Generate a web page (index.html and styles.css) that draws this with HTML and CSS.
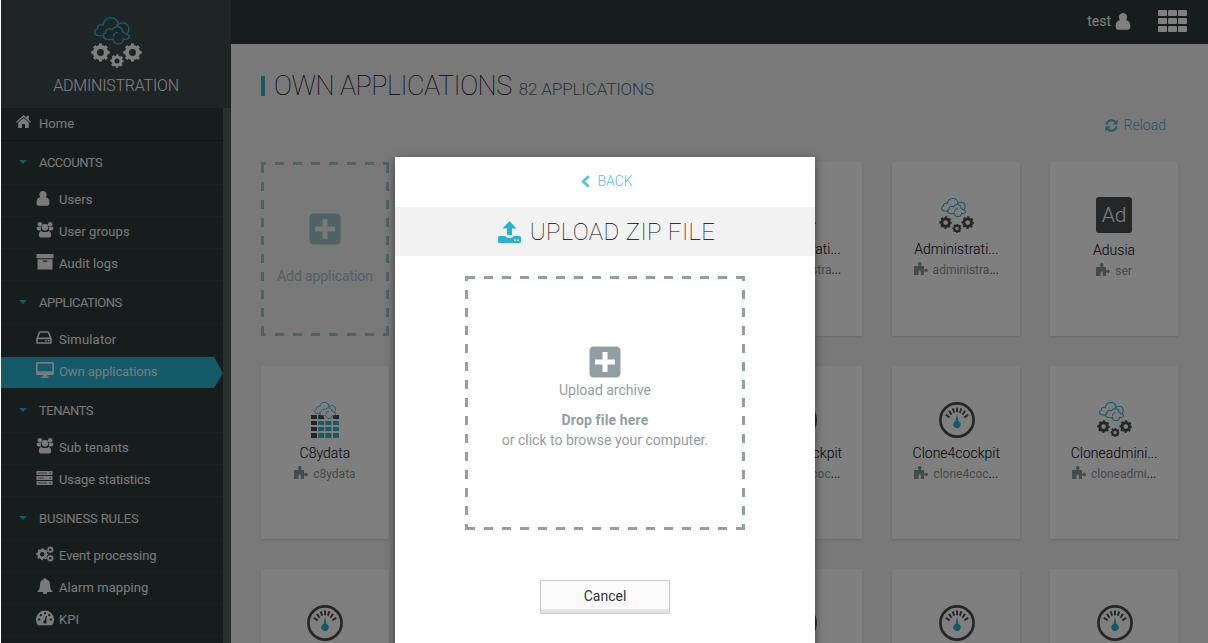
FILE: index.html
```html
<!DOCTYPE html>
<html lang="en">
<head>
<meta charset="utf-8">
<title>Administration</title>
<link rel="stylesheet" href="styles.css">
</head>
<body>
<svg class="defs" aria-hidden="true">
  <symbol id="clouds" viewBox="282 50 110 88">
    <g fill="none" stroke="#28b4d0" stroke-width="4.5">
      <path d="M314 108H298C282 108 282 90 293 87C292 76 302 72 310 76C312 60 324 54 334 54C346 54 355 63 357 77M350 80C357 66 384 66 387 84C388 92 386 98 383 102"/>
      <path d="M322 119C308 118 308 102 318 99C314 90 330 84 337 90C345 76 370 78 369 97C378 98 376 104 383 104C394 108 390 122 371 118C370 138 342 138 340 118C336 120 326 120 322 119ZM341 111C341 103 348 97 355 99"/>
    </g>
  </symbol>
  <symbol id="gear" viewBox="0 0 20 20">
    <circle cx="10" cy="10" r="5.8" fill="none" stroke="currentColor" stroke-width="4.4"/>
    <circle cx="10" cy="10" r="8.3" fill="none" stroke="currentColor" stroke-width="2.6" pathLength="16" stroke-dasharray="1 1" stroke-dashoffset=".5"/>
  </symbol>
  <symbol id="admin" viewBox="0 0 52 52">
    <use href="#clouds" x="2.7" y="-.6" width="36.7" height="29.3"/>
    <use href="#gear" x="0" y="26" width="19" height="19"/>
    <use href="#gear" x="32" y="26" width="19" height="19"/>
    <use href="#gear" x="19" y="37" width="14" height="14"/>
  </symbol>
  <symbol id="gauge" viewBox="0 0 36 36">
    <circle cx="18" cy="18" r="16.6" fill="none" stroke="currentColor" stroke-width="2.7"/>
    <path d="M18 5.5v4.8M13.7 6.4l1.5 4.4M22.3 6.4l-1.5 4.4M9.9 8.8l2.7 3.8M26.1 8.8l-2.7 3.8M6.7 12.8l4 2.6M29.3 12.8l-4 2.6" stroke="currentColor" stroke-width="1.9"/>
    <path d="M18 12l1.5 7a3.8 3.8 0 1 1-3 0z" fill="#28b4d0"/>
  </symbol>
  <symbol id="data" viewBox="0 0 36 36">
    <path d="M4 13h6v4H4zM4 19h6v4H4zM4 25h6v4H4zM4 31h6v5H4zM26 13h6v4h-6zM11.2 13h4.5l2 4h-6.500z" fill="currentColor"/>
    <path d="M11.200 19h6v4h-6zM18.400 19h6v4h-6zM26 19h6v4h-6zM11.200 25h6v4h-6zM18.400 25h6v4h-6zM26 25h6v4h-6zM11.200 31h6v5h-6zM18.400 31h6v5h-6zM26 31h6v5h-6z" fill="#28b4d0"/>
    <use href="#clouds" x="7" y="-.5" width="22.500" height="18"/>
  </symbol>
  <symbol id="puzzle" viewBox="0 0 14 13">
    <path d="M0 4h4.500V3a1.800 1.800 0 1 1 2.500 0v1h3v3.500h1a1.600 1.600 0 1 1 0 2h-1V13H6.800V9.500a1 1 0 0 0-2.200 0V13H0z" fill="currentColor"/>
  </symbol>
  <symbol id="user" viewBox="0 0 14 15">
    <path d="M7 0a3.500 3.700 0 0 1 2.600 6.300C12 6.500 13.500 8.500 13.500 12q0 2.700-2 2.700h-9q-2 0-2-2.700C.5 8.500 2 6.500 4.400 6.300A3.500 3.700 0 0 1 7 0z" fill="currentColor"/>
  </symbol>
  <symbol id="users" viewBox="0 0 18 17">
    <g fill="currentColor"><circle cx="3.500" cy="2.500" r="2.400"/><circle cx="14.500" cy="2.500" r="2.400"/><circle cx="9" cy="5.700" r="3.500"/><path d="M1.500 5h3.500q-.8 2.500 0 4H2Q0 9 0 7.200T1.500 5zM16.500 5H13q.8 2.500 0 4h3q2 0 2-1.800T16.500 5zM5 9.500q4 2.500 8 0 2.500.5 2.500 4.500 0 2.500-2 2.500h-9q-2 0-2-2.500 0-4 2.500-4.500z"/></g>
  </symbol>
  <symbol id="home" viewBox="0 0 15 13">
    <path d="M7.500 0l3 2.700V.8h2.300v4L15 6.900l-.8.9-6.700-5.900L.8 7.800 0 6.900zM7.500 3l5.300 4.600V13H9V9H6v4H2.200V7.600z" fill="currentColor"/>
  </symbol>
  <symbol id="archive" viewBox="0 0 16 15">
    <path d="M0 0h16v4H0zM1 5h14v9.500H1zM6 6v1.200h4V6z" fill="currentColor" fill-rule="evenodd"/>
  </symbol>
  <symbol id="drive" viewBox="0 0 15 12">
    <path d="M1 7L3.500.8h8L14 7v4.200H1zM1 6.800h13" fill="none" stroke="currentColor" stroke-width="1.500" stroke-linejoin="round"/><path d="M8.500 8.300H10v1.500H8.500zM11 8.300h1.500v1.500H11z" fill="currentColor"/>
  </symbol>
  <symbol id="desktop" viewBox="0 0 18 16">
    <path d="M1.500 0h15Q18 0 18 1.500v10q0 1.500-1.500 1.500H11v1.500h1.500V16h-7v-1.500H7V13H1.500Q0 13 0 11.500v-10Q0 0 1.500 0zm.2 1.700v7.600h14.600V1.700z" fill="currentColor" fill-rule="evenodd"/>
  </symbol>
  <symbol id="server" viewBox="0 0 16 14">
    <path d="M0 0h16v4H0zM0 5h16v4H0zM0 10h16v4H0z" fill="currentColor"/><path d="M1.500 2h9M1.500 7h6M1.500 12h9" stroke="#727b7b"/><path d="M13 2h1.500M13 7h1.500M13 12h1.500" stroke="#2e3a3a"/>
  </symbol>
  <symbol id="cogs" viewBox="0 0 18 16">
    <use href="#gear" x="0" y="2" width="12.500" height="12.500"/><use href="#gear" x="10.500" y="0" width="7.500" height="7.500"/><use href="#gear" x="10.500" y="8.500" width="7.500" height="7.500"/>
  </symbol>
  <symbol id="bell" viewBox="0 0 16 16">
    <path d="M8 0q1.200 0 1.200 1.300C12 2 13 4 13 7c0 3.500 1 5 2.500 6.300V14h-5.300a2.200 2.200 0 0 1-4.400 0H.5v-.7C2 12 3 10.500 3 7c0-3 1-5 3.800-5.700Q6.800 0 8 0z" fill="currentColor"/>
  </symbol>
  <symbol id="kpi" viewBox="0 0 16 14">
    <path d="M1.800 13.500A8 8 0 1 1 14.200 13.500z" fill="currentColor"/>
    <g fill="#2e3a3a"><circle cx="2.800" cy="8.500" r="1"/><circle cx="4.300" cy="4.500" r="1"/><circle cx="8" cy="2.800" r="1"/><circle cx="11.700" cy="4.500" r="1"/><circle cx="13.200" cy="8.500" r="1"/></g>
    <path d="M9.300 5.300L8.200 10" stroke="#2e3a3a" stroke-width="1.200"/><circle cx="8" cy="10.500" r="1.500" fill="#2e3a3a"/>
  </symbol>
  <symbol id="plus" viewBox="0 0 32 32">
    <path d="M5 .5h22Q31.500 .5 31.500 5v22q0 4.500-4.500 4.500H5Q.5 31.500.5 27V5Q.5.500 5 .500zM13.500 6v7.500H6v5h7.500V26h5v-7.500H26v-5h-7.500V6z" fill="currentColor" fill-rule="evenodd"/>
  </symbol>
</svg>

<div class="screen">
  <aside class="sidebar">
    <div class="brand">
      <svg class="brand-icon"><use href="#admin"/></svg>
      <span class="brand-name">ADMINISTRATION</span>
    </div>
    <nav class="nav">
      <a class="nav-home"><svg class="ico-home"><use href="#home"/></svg><span>Home</span></a>
      <h4 class="nav-head"><i class="caret"></i>ACCOUNTS</h4>
      <a class="nav-item"><svg class="ico-user"><use href="#user"/></svg><span>Users</span></a>
      <a class="nav-item"><svg class="ico-wide"><use href="#users"/></svg><span>User groups</span></a>
      <a class="nav-item"><svg class="ico-wide"><use href="#archive"/></svg><span>Audit logs</span></a>
      <h4 class="nav-head"><i class="caret"></i>APPLICATIONS</h4>
      <a class="nav-item"><svg class="ico-drive"><use href="#drive"/></svg><span class="loose">Simulator</span></a>
      <a class="nav-item active"><svg class="ico-wide"><use href="#desktop"/></svg><span class="tight">Own applications</span></a>
      <h4 class="nav-head"><i class="caret"></i>TENANTS</h4>
      <a class="nav-item"><svg class="ico-wide"><use href="#users"/></svg><span>Sub tenants</span></a>
      <a class="nav-item"><svg class="ico-server"><use href="#server"/></svg><span class="tight">Usage statistics</span></a>
      <h4 class="nav-head wide"><i class="caret"></i>BUSINESS RULES</h4>
      <a class="nav-item"><svg class="ico-wide"><use href="#cogs"/></svg><span class="tight">Event processing</span></a>
      <a class="nav-item"><svg class="ico-wide"><use href="#bell"/></svg><span>Alarm mapping</span></a>
      <a class="nav-item"><svg class="ico-wide"><use href="#kpi"/></svg><span>KPI</span></a>
    </nav>
  </aside>

  <div class="main">
    <header class="topbar">
      <span class="user-name">test</span>
      <svg class="user-icon"><use href="#user"/></svg>
      <svg class="apps-icon" viewBox="0 0 29 22" fill="currentColor"><path d="M1 0h7q1 0 1 1v4q0 1-1 1H1Q0 6 0 5V1q0-1 1-1zM11 0h7q1 0 1 1v4q0 1-1 1h-7q-1 0-1-1V1q0-1 1-1zM21 0h7q1 0 1 1v4q0 1-1 1h-7q-1 0-1-1V1q0-1 1-1zM1 8h7q1 0 1 1v4q0 1-1 1H1q-1 0-1-1V9q0-1 1-1zM11 8h7q1 0 1 1v4q0 1-1 1h-7q-1 0-1-1V9q0-1 1-1zM21 8h7q1 0 1 1v4q0 1-1 1h-7q-1 0-1-1V9q0-1 1-1zM1 16h7q1 0 1 1v4q0 1-1 1H1q-1 0-1-1v-4q0-1 1-1zM11 16h7q1 0 1 1v4q0 1-1 1h-7q-1 0-1-1v-4q0-1 1-1zM21 16h7q1 0 1 1v4q0 1-1 1h-7q-1 0-1-1v-4q0-1 1-1z"/></svg>
    </header>
    <div class="title-row">
      <h1 class="title">OWN APPLICATIONS</h1>
      <span class="count">82 APPLICATIONS</span>
    </div>
    <div class="actions">
      <svg class="reload-icon" viewBox="0 0 13 13"><path d="M1.500 5.500A5 5 0 0 1 10.300 3M11.500 7.500A5 5 0 0 1 2.700 10" fill="none" stroke="currentColor" stroke-width="2"/><path d="M12.500.5v5h-5zM.5 12.500v-5h5z" fill="currentColor"/></svg>
      <span class="reload">Reload</span>
    </div>
    <div class="grid">
      <div class="add-card"><svg class="add-icon"><use href="#plus"/></svg><span class="add-text">Add application</span></div>
      <div class="card col-4"><svg class="app-icon"><use href="#admin"/></svg><span class="name">Administrati...</span><span class="sub"><svg class="pz"><use href="#puzzle"/></svg>administra<b class="dots">...</b></span></div>
      <div class="card"><svg class="app-icon"><use href="#admin"/></svg><span class="name">Administrati...</span><span class="sub"><svg class="pz"><use href="#puzzle"/></svg>administra<b class="dots">...</b></span></div>
      <div class="card"><span class="badge">Ad</span><span class="name">Adusia</span><span class="sub"><svg class="pz"><use href="#puzzle"/></svg>ser</span></div>

      <div class="card"><svg class="app-icon"><use href="#data"/></svg><span class="name">C8ydata</span><span class="sub"><svg class="pz"><use href="#puzzle"/></svg>c8ydata</span></div>
      <div class="card col-4"><svg class="app-icon"><use href="#gauge"/></svg><span class="name">Clone3cockpit</span><span class="sub"><svg class="pz"><use href="#puzzle"/></svg>clone3coc<b class="dots">...</b></span></div>
      <div class="card"><svg class="app-icon"><use href="#gauge"/></svg><span class="name">Clone4cockpit</span><span class="sub"><svg class="pz"><use href="#puzzle"/></svg>clone4coc<b class="dots">...</b></span></div>
      <div class="card"><svg class="app-icon"><use href="#admin"/></svg><span class="name">Cloneadmini...</span><span class="sub"><svg class="pz"><use href="#puzzle"/></svg>cloneadmi<b class="dots">...</b></span></div>

      <div class="card"><svg class="app-icon"><use href="#gauge"/></svg></div>
      <div class="card col-4"><svg class="app-icon"><use href="#gauge"/></svg></div>
      <div class="card"><svg class="app-icon"><use href="#gauge"/></svg></div>
      <div class="card"><svg class="app-icon"><use href="#gauge"/></svg></div>
    </div>
  </div>

  <div class="backdrop">
    <section class="modal">
      <div class="back"><svg class="back-icon" viewBox="0 0 9 13"><path d="M7.700 1.300L2.300 6.500l5.400 5.200" fill="none" stroke="currentColor" stroke-width="2.900"/></svg><span>BACK</span></div>
      <div class="modal-head">
        <svg class="upload-icon" viewBox="0 0 23 22"><path d="M11.500 0L18.500 7.500H14V14H9V7.500H4.500zM1.500 15H7q1.500 2 4.500 2t4.500-2h5.500Q23 15 23 16.500v4q0 1.500-1.500 1.500h-20Q0 22 0 20.500v-4Q0 15 1.500 15z" fill="#28b4d0"/><path d="M16 18.500h1.500V20H16zM19.200 18.500h1.500V20h-1.500z" fill="#fff"/></svg>
        <h2 class="modal-title">UPLOAD ZIP FILE</h2>
      </div>
      <div class="drop">
        <svg class="drop-icon"><use href="#plus"/></svg>
        <span class="drop-label">Upload archive</span>
        <strong class="drop-strong">Drop file here</strong>
        <span class="drop-hint">or click to browse your computer.</span>
      </div>
      <button class="cancel">Cancel</button>
    </section>
  </div>
</div>
</body>
</html>
```
FILE: styles.css
```css
* { box-sizing: border-box; }
body { margin: 0; background: #fff; font-family: Roboto, "Liberation Sans", sans-serif; font-size: 13px; }
svg { display: block; flex: none; }
h1, h2, h4 { margin: 0; font-weight: 400; }
.defs { position: absolute; width: 0; height: 0; }
.screen { position: relative; display: flex; width: 1208px; height: 643px; padding-left: 1px; overflow: hidden; }

/* Sidebar */
.sidebar { width: 230px; height: 643px; background: #545c5e; color: #fff; overflow: hidden; }
.brand { height: 108px; background: #3e4a4a; padding-top: 17px; display: flex; flex-direction: column; align-items: center; }
.brand-icon { width: 52px; height: 52px; margin-left: 2px; }
.brand-name { margin-top: 7px; font-size: 16px; line-height: 20px; font-weight: 300; letter-spacing: -.2px; white-space: nowrap; }
.nav { width: 222px; height: 535px; background: #2e3a3a; }
.nav-home, .nav-item { display: flex; align-items: flex-start; white-space: nowrap; border-bottom: 1px solid #364141; letter-spacing: .08px; color: #f4f4f4; }
.nav-home { height: 33px; padding: 8px 0 0 15px; gap: 8px; line-height: 16px; border-color: #222a2a; }
.ico-home { width: 15px; height: 13px; margin-top: -1px; }
.nav-head { height: 44px; display: flex; align-items: center; padding: 0 0 1px 18px; gap: 12px; font-size: 13px; letter-spacing: -.5px; color: #f0f0f0; border-bottom: 1px solid #364141; }
.nav-head.wide { letter-spacing: -.15px; }
.caret { border: 4px solid transparent; border-top-color: #28b4d0; border-bottom: 0; }
.nav-item { height: 32px; padding: 6px 0 0 35px; line-height: 18px; }
.nav-item span { margin-left: auto; width: 164px; }
.nav-item .tight { letter-spacing: -.08px; }
.nav-item .loose { letter-spacing: .2px; }
.nav-item.active { background: #28b4d0; background-clip: padding-box; clip-path: polygon(0 0, 213px 0, 222px 50%, 213px 31px, 0 31px); }
.ico-user { width: 14px; height: 15px; }
.ico-wide { width: 18px; height: 16px; margin-top: -1px; }
.ico-drive { width: 16px; height: 13px; }
.ico-server { width: 17px; height: 14px; }

/* Main area */
.main { flex: 1; background: #f3f3f3; }
.topbar { height: 44px; background: #2e3a3a; color: #fff; display: flex; align-items: center; justify-content: flex-end; padding: 0 21px 2px 0; }
.user-name { font-size: 14px; line-height: 18px; }
.user-icon { width: 16px; height: 17px; margin-left: 4px; }
.apps-icon { width: 29px; height: 22px; margin-left: 27px; }
.title-row { height: 72px; padding: 32px 0 0 30px; display: flex; align-items: baseline; }
.title { border-left: 4px solid #28b4d0; padding-left: 9px; font-size: 27px; line-height: 20px; font-weight: 100; color: #000; letter-spacing: -.5px; white-space: nowrap; }
.count { margin-left: 7px; font-size: 17px; line-height: 20px; font-weight: 300; color: #607073; letter-spacing: -.12px; white-space: nowrap; }
.actions { height: 46px; padding: 2px 42px 0 0; display: flex; justify-content: flex-end; align-items: flex-start; gap: 6px; color: #48b0cc; }
.reload-icon { width: 13px; height: 13px; margin-top: 1px; }
.reload { font-size: 14px; line-height: 15px; font-weight: 300; }
.grid { display: grid; grid-template-columns: repeat(6, 1fr); grid-auto-rows: 173.500px; gap: 30px; padding: 0 30px; }
.card { background: #fff; box-shadow: 0 1px 2px rgba(0, 0, 0, .15); display: flex; flex-direction: column; align-items: center; padding-top: 36px; }
.col-4 { grid-column: 4; }
.app-icon { width: 36px; height: 36px; margin-left: 1px; color: #4a4d4f; }
.name { margin-top: 6px; font-size: 14px; line-height: 18px; font-weight: 300; color: #000; white-space: nowrap; }
.sub { margin-top: 4px; display: flex; font-size: 12px; line-height: 16px; color: #84969a; white-space: nowrap; }
.pz { width: 14px; height: 13px; margin-right: 5px; }
.dots { font-weight: 400; color: #333; }
.badge { width: 36px; height: 36px; margin-top: -1px; margin-bottom: 1px; border-radius: 3px; background: #4a4d4f; color: #fff; font-size: 21px; line-height: 37px; font-weight: 300; text-align: center; }
.badge + .name { margin-top: 7px; }
.add-card, .drop {
  background:
    linear-gradient(90deg, var(--dash) 50%, transparent 50%) var(--dx) 0 / 18px 3px repeat-x,
    linear-gradient(90deg, var(--dash) 50%, transparent 50%) var(--dx) 100% / 18px 3px repeat-x,
    linear-gradient(var(--dash) 50%, transparent 50%) 0 var(--dy) / 3px 18px repeat-y,
    linear-gradient(var(--dash) 50%, transparent 50%) 100% var(--dy) / 3px 18px repeat-y;
}
.add-card { --dash: #9ec4c8; --dx: -4px; --dy: 2px; color: #9ec4c8; display: flex; flex-direction: column; align-items: center; padding-top: 51px; }
.add-icon, .drop-icon { width: 32px; height: 32px; }
.add-text { margin-top: 22px; font-size: 14px; line-height: 18px; letter-spacing: -.1px; white-space: nowrap; }

/* Dialog */
.backdrop { position: absolute; inset: 0 0 0 1px; background: rgba(0, 0, 0, .5); padding: 157px 0 0 394px; }
.modal { width: 420px; height: 520px; background: #fff; box-shadow: 0 3px 9px rgba(0, 0, 0, .5); display: flex; flex-direction: column; align-items: center; }
.back { height: 50px; display: flex; align-items: center; gap: 7px; padding: 0 0 2px 4px; color: #5bbfde; font-size: 14px; font-weight: 300; }
.back-icon { width: 9px; height: 13px; }
.modal-head { width: 420px; height: 49px; background: #f2f2f2; display: flex; align-items: center; justify-content: center; gap: 9px; padding-left: 3px; }
.upload-icon { width: 23px; height: 22px; }
.modal-title { font-size: 24px; line-height: 30px; font-weight: 100; color: #000; letter-spacing: .35px; white-space: nowrap; }
.drop { --dash: #919ea3; --dx: 1px; --dy: -4px; width: 280px; height: 254px; margin-top: 20px; padding-top: 70px; display: flex; flex-direction: column; align-items: center; color: #919ea3; font-size: 14px; line-height: 20px; white-space: nowrap; }
.drop-icon { margin-right: 1px; }
.drop-label { margin-top: 2px; }
.drop-strong { margin-top: 10px; font-weight: 700; letter-spacing: .15px; }
.cancel { margin-top: 50px; width: 130px; height: 34px; padding: 0 0 2px; border: 1px solid #ccc; background: #fafafa; box-shadow: inset 0 -4px 0 #e2e2e2; font: 400 14px/20px Roboto, sans-serif; color: #333; }
```
